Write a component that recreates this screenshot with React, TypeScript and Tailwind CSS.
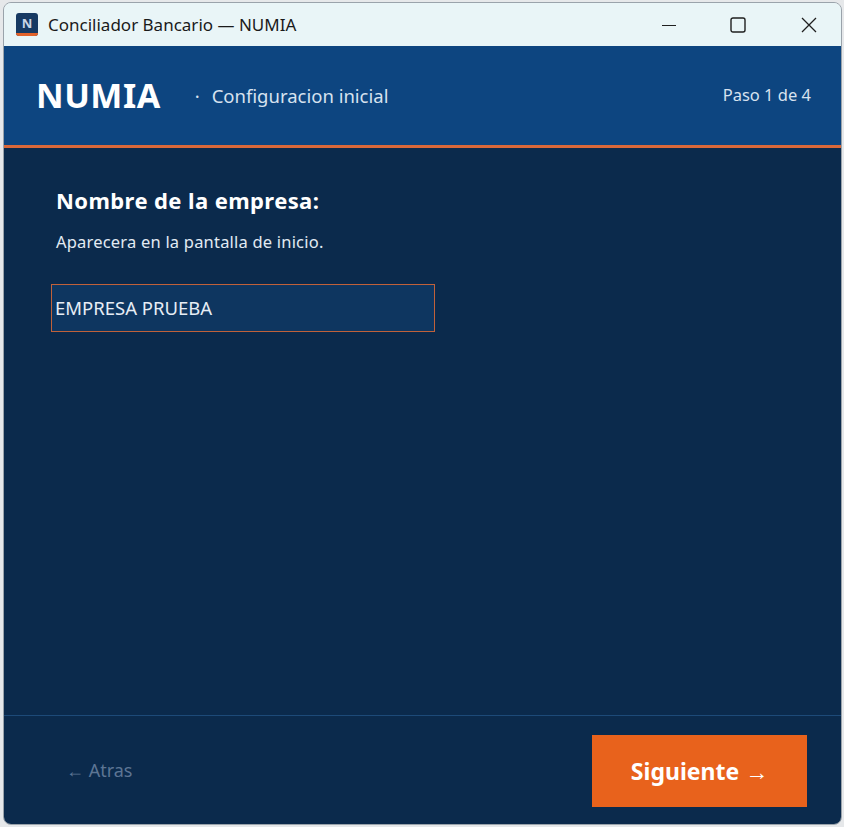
const font = { fontFamily: '"Noto Sans", "Open Sans", sans-serif' };

function AppIcon() {
  return (
    <div className="flex h-[23px] w-[22px] flex-col overflow-hidden rounded-[3px] bg-[#173a63]">
      <div className="flex flex-1 items-center justify-center text-[13px] font-bold leading-none text-[#c9d6e6]">N</div>
      <div className="h-[3px] bg-[#e2622a]" />
    </div>
  );
}

function WinControls() {
  return (
    <div className="ml-auto flex h-full items-center pr-[9px]">
      <div className="flex h-full w-[46px] items-center justify-center">
        <svg width="16" height="16" viewBox="0 0 16 16" fill="none" stroke="#1f1f1f" strokeWidth="1.2">
          <path d="M1 8.5h14" />
        </svg>
      </div>
      <div className="ml-[23px] flex h-full w-[46px] items-center justify-center">
        <svg width="16" height="16" viewBox="0 0 16 16" fill="none" stroke="#1f1f1f" strokeWidth="1.4">
          <rect x="1" y="1" width="14" height="14" rx="2" />
        </svg>
      </div>
      <div className="ml-[25px] flex h-full w-[46px] items-center justify-center">
        <svg width="16" height="16" viewBox="0 0 16 16" fill="none" stroke="#1f1f1f" strokeWidth="1.3">
          <path d="M1 1l14 14M15 1L1 15" />
        </svg>
      </div>
    </div>
  );
}

export default function App() {
  return (
    <div className="h-[827px] w-[844px] bg-[#e6e8ea] pl-[3px] pr-[2px] pt-[2px] pb-[2px]" style={font}>
      <div className="flex h-full flex-col overflow-hidden rounded-lg border border-[#9aa3ab]">
        {/* Title bar */}
        <div className="flex h-[43px] items-center bg-[#e9f5f7] pl-[12px]">
          <AppIcon />
          <span className="ml-[10px] text-[17px] text-[#1a1a1a]">Conciliador Bancario — NUMIA</span>
          <WinControls />
        </div>

        {/* Header */}
        <div className="flex h-[102px] items-center border-b-[3px] border-[#d9683a] bg-[#0d4580] pl-[32px] pr-[30px]">
          <span className="text-[34px] font-bold tracking-[0.5px] text-white">NUMIA</span>
          <span className="ml-[34px] text-[18.5px] text-[#d7e2ef]">·</span>
          <span className="ml-[12px] text-[18.5px] text-[#d7e2ef]">Configuracion inicial</span>
          <span className="ml-auto text-[16.5px] text-[#d7e2ef]">Paso 1 de 4</span>
        </div>

        {/* Body */}
        <div className="flex flex-1 flex-col bg-[#0b2a4c] pl-[52px] pt-[36px]">
          <h2 className="text-[22px] font-bold tracking-[0.4px] text-white">Nombre de la empresa:</h2>
          <p className="mt-[13px] text-[16.5px] tracking-[0.2px] text-[#e2eaf3]">Aparecera en la pantalla de inicio.</p>
          <input
            defaultValue="EMPRESA PRUEBA"
            className="mt-[29px] h-[48px] w-[384px] -translate-x-[5px] border border-[#c0613a] bg-[#0e3660] px-[3px] text-[18.5px] text-[#e6edf5] outline-none"
            style={font}
          />
        </div>

        {/* Footer */}
        <div className="flex h-[109px] items-center justify-between border-t border-[#1d4a78] bg-[#0b2a4c] pl-[62px] pr-[34px]">
          <button className="text-[18px] text-[#5d7594]" style={font}>← Atras</button>
          <button className="mt-[2px] h-[72px] w-[215px] bg-[#e8621c] text-[23px] font-bold text-white" style={font}>
            Siguiente →
          </button>
        </div>
      </div>
    </div>
  );
}
